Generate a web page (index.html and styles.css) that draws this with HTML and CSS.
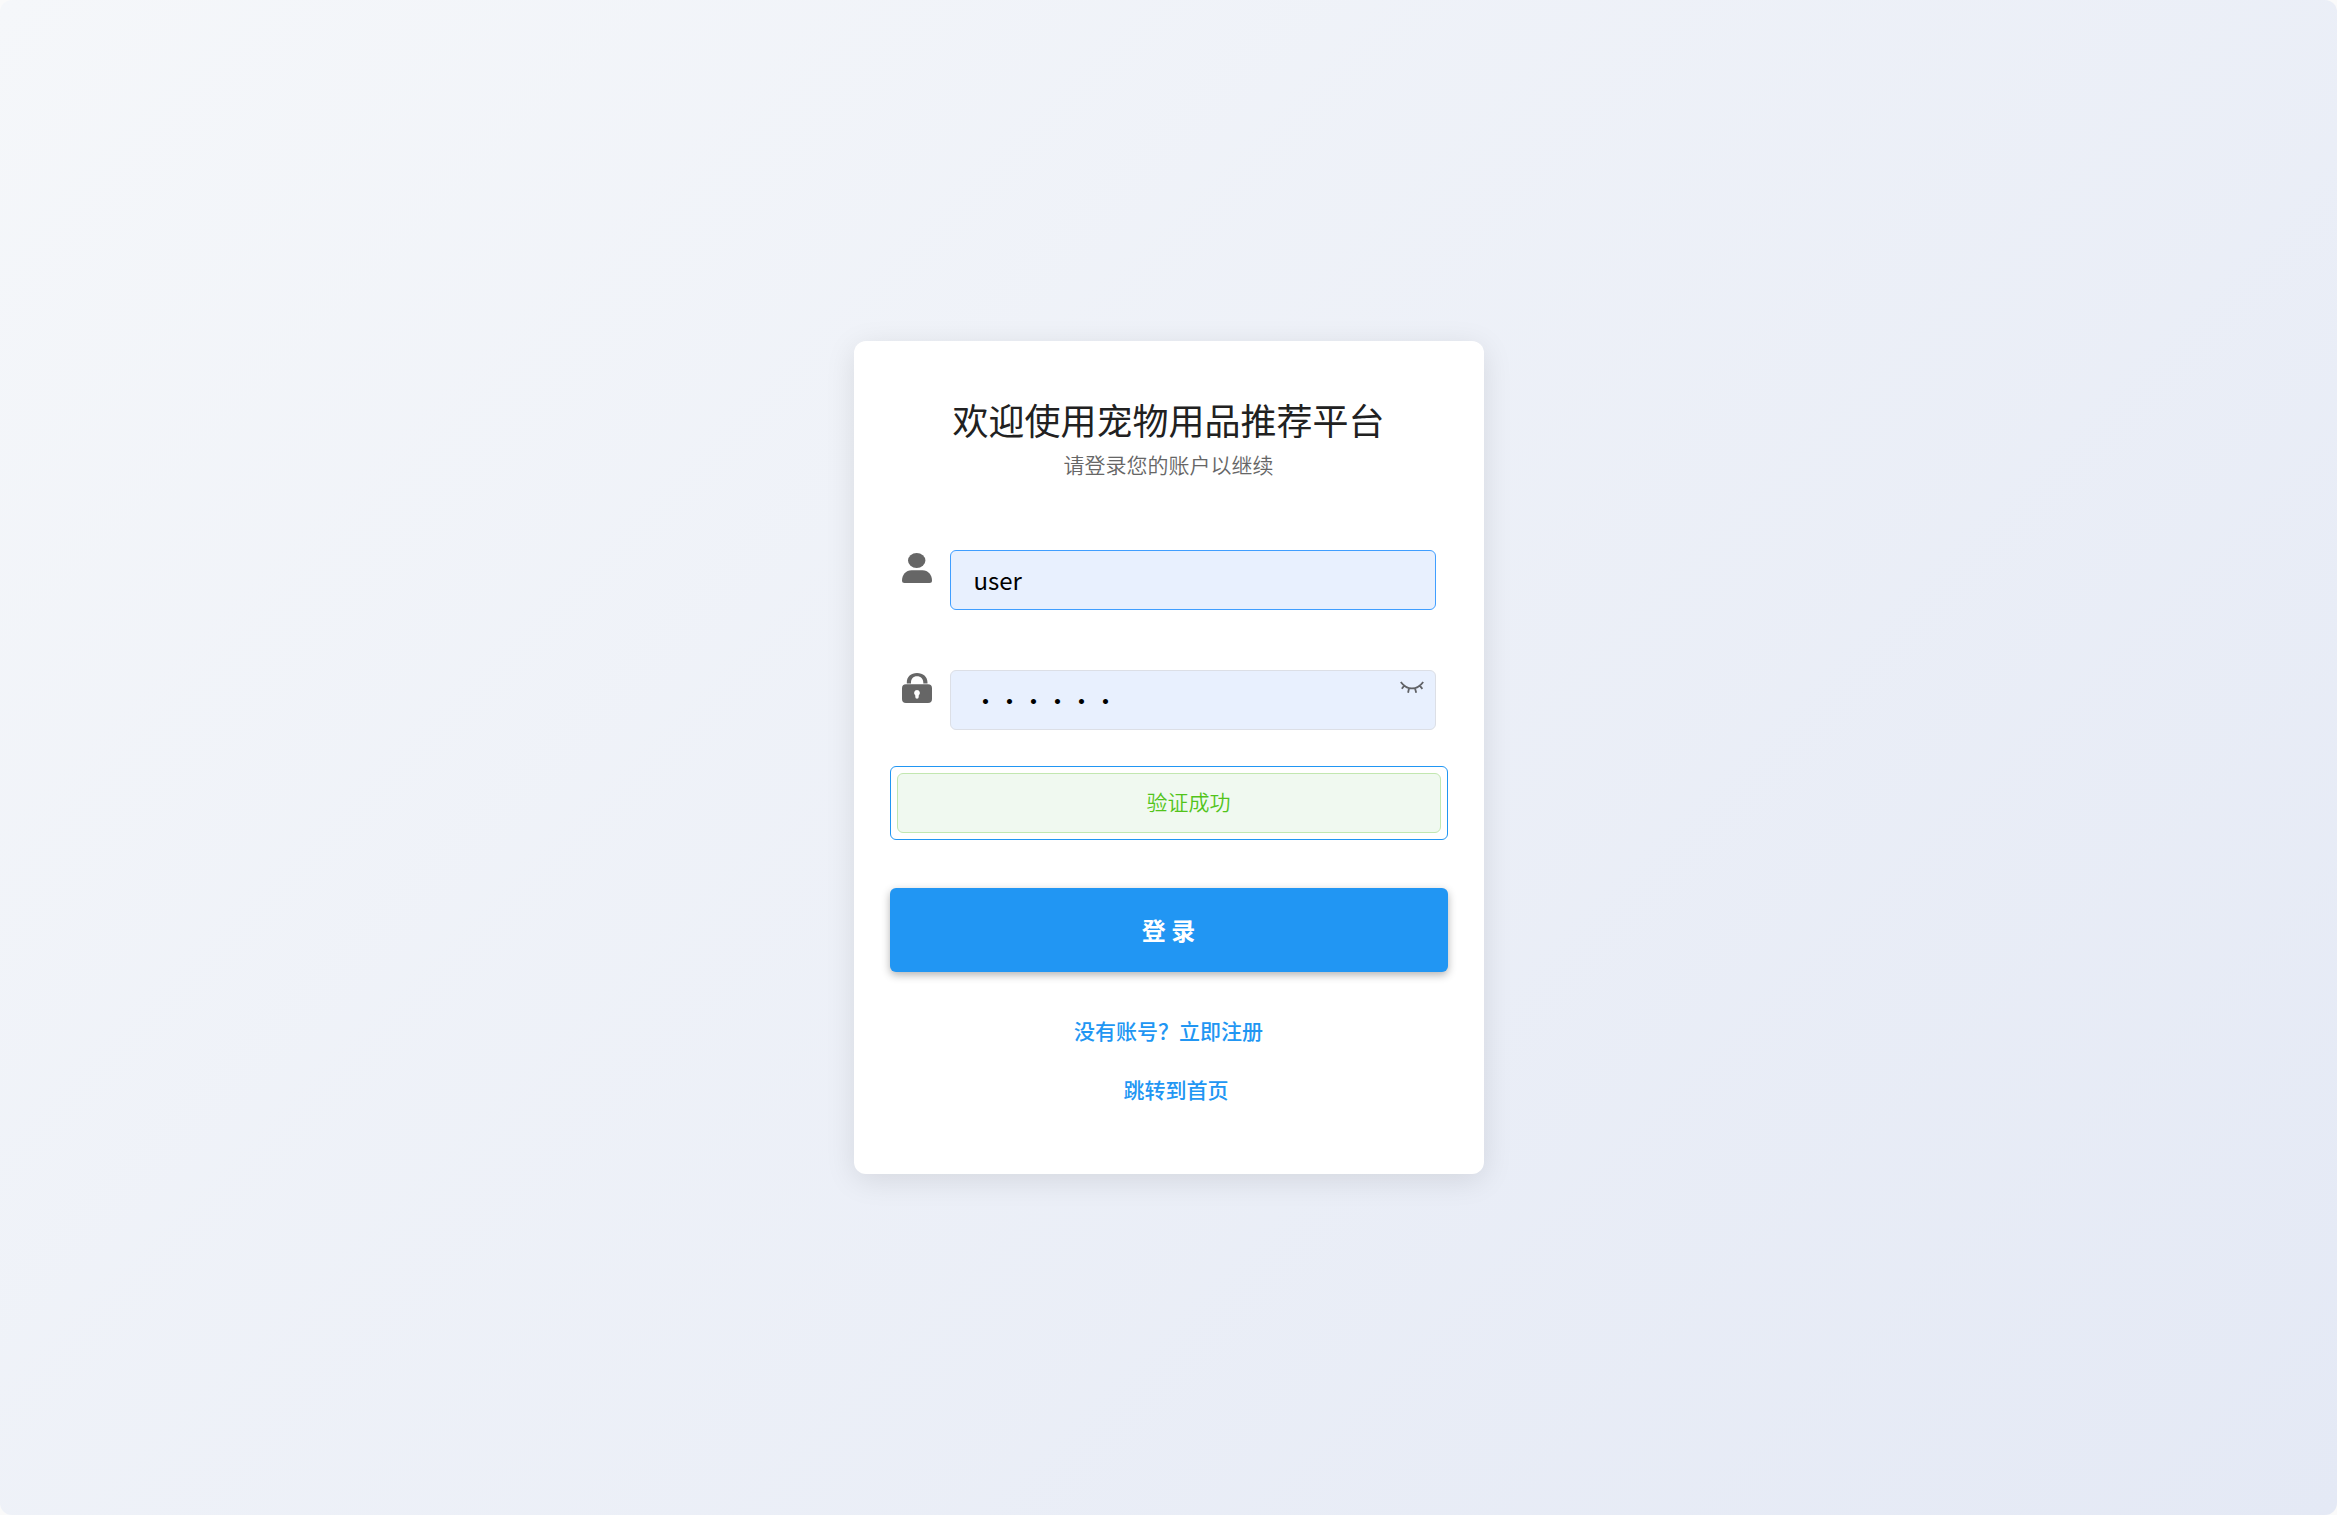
FILE: index.html
```html
<!DOCTYPE html>
<html lang="zh-CN">
<head>
<meta charset="utf-8">
<meta name="viewport" content="width=device-width, initial-scale=1">
<title>登录</title>
<link rel="stylesheet" href="styles.css">
</head>
<body>
<div class="page">
  <main class="card">
    <header class="heading">
      <h1 class="title">欢迎使用宠物用品推荐平台</h1>
      <p class="subtitle">请登录您的账户以继续</p>
    </header>
    <form class="form">
      <div class="field">
        <label class="field-icon" for="username" aria-label="用户名">
          <svg viewBox="0 0 30 30" aria-hidden="true"><ellipse cx="14.7" cy="7.5" rx="8.7" ry="7.5"/><path d="M9.5 17.200h11C26 17.200 30 22 30 27.500Q30 30 27.500 30h-25Q0 30 0 27.500C0 22 4 17.200 9.500 17.200z"/></svg>
        </label>
        <div class="control">
          <input class="input input-active" id="username" type="text" value="user">
        </div>
      </div>
      <div class="field">
        <label class="field-icon" for="password" aria-label="密码">
          <svg viewBox="0 0 30 30" aria-hidden="true"><path d="M4.800 10.600V9.500C4.800 3.800 9 0 15 0s10.500 3.800 10.500 9.500v1.100h-4.200V9.500C21.300 5.800 18.800 3.200 15 3.200S9 5.800 9 9.500v1.100z"/><path fill-rule="evenodd" d="M4 11.300h22a4 4 0 0 1 4 4V26a4 4 0 0 1-4 4H4a4 4 0 0 1-4-4V15.300a4 4 0 0 1 4-4zM15 17a3 3 0 0 0-1.700 5.400V24a1.700 1.700 0 0 0 3.400 0v-1.600A3 3 0 0 0 15 17z"/></svg>
        </label>
        <div class="control">
          <input class="input" id="password" type="password" value="123456">
          <button class="toggle" type="button" aria-label="显示密码">
            <svg viewBox="0 0 24 14" aria-hidden="true"><path d="M.8 1C7 9.600 17 9.600 23.200 1M4.300 4.600 1.800 7.800M19.700 4.600l2.700 3.200M9 7.200l-.9 4.500M15 7.200l1.200 4.500"/></svg>
          </button>
        </div>
      </div>
      <div class="verify">
        <div class="verify-result" role="status">验证成功</div>
      </div>
      <button class="submit" type="submit">登 录</button>
    </form>
    <nav class="links">
      <a class="link" href="#register">没有账号？立即注册</a>
      <a class="link link-home" href="#home">跳转到首页</a>
    </nav>
  </main>
</div>
</body>
</html>
```
FILE: styles.css
```css
* { box-sizing: border-box; }

body {
  margin: 0;
  background: #fafafa;
  font-family: "Noto Sans CJK SC", sans-serif;
  font-size: 21px;
  line-height: 32px;
}

.page {
  display: flex;
  align-items: center;
  justify-content: center;
  min-height: 100vh;
  border-radius: 12px;
  background: linear-gradient(135deg, #f5f7fa 0%, #e4e9f5 100%);
}

.card {
  width: 100%;
  max-width: 630px;
  padding: 51px 36px 69px;
  border-radius: 12px;
  background: #fff;
  box-shadow: 0 6px 30px rgba(0, 0, 0, 0.1);
}

.heading {
  margin-bottom: 70px;
  text-align: center;
}

.title {
  margin: 0 0 2px;
  color: #212121;
  font-size: 36px;
  font-weight: 400;
  line-height: 54px;
}

.subtitle {
  margin: 0;
  color: #666;
  font-weight: 350;
}

.form {
  display: flex;
  flex-direction: column;
}

.field {
  display: flex;
  gap: 18px;
  margin-bottom: 60px;
  padding: 0 12px;
}

.field + .field { margin-bottom: 36px; }

.field-icon {
  flex: none;
  width: 30px;
  height: 30px;
  margin-top: 3px;
}

.field-icon svg {
  display: block;
  fill: #666;
}

.control {
  position: relative;
  flex: 1;
}

.input {
  display: block;
  width: 100%;
  height: 60px;
  padding: 0 23px 2px;
  border: 1px solid #dcdfe6;
  border-radius: 6px;
  outline: none;
  background: #e8f0fe;
  color: #000;
  font: 24px "Noto Sans CJK SC", sans-serif;
}

.input-active { border-color: #409eff; }

.toggle {
  position: absolute;
  top: 11px;
  right: 12px;
  width: 24px;
  height: 14px;
  padding: 0;
  border: 0;
  background: none;
  cursor: pointer;
}

.toggle svg {
  display: block;
  fill: none;
  stroke: #606266;
  stroke-width: 1.8;
}

.verify {
  margin-bottom: 48px;
  padding: 6px;
  border: 1px solid #2196f3;
  border-radius: 6px;
}

.verify-result {
  padding: 11px 0 15px 40px;
  border: 1px solid #c2e7b0;
  border-radius: 6px;
  background: #f0f9f0;
  color: #52c41a;
  font-weight: 350;
  text-align: center;
}

.submit {
  height: 84px;
  padding: 0 0 2px;
  border: 0;
  border-radius: 6px;
  background: #2196f3;
  box-shadow: 0 3px 8px rgba(0, 0, 0, 0.3);
  color: #fff;
  font: 700 24px "Noto Sans CJK SC", sans-serif;
  cursor: pointer;
}

.links {
  display: flex;
  flex-direction: column;
  align-items: center;
  gap: 27px;
  margin-top: 42px;
}

.link {
  color: #2196f3;
  font-weight: 500;
  text-decoration: none;
}

.link-home { margin-left: 15px; }
```
